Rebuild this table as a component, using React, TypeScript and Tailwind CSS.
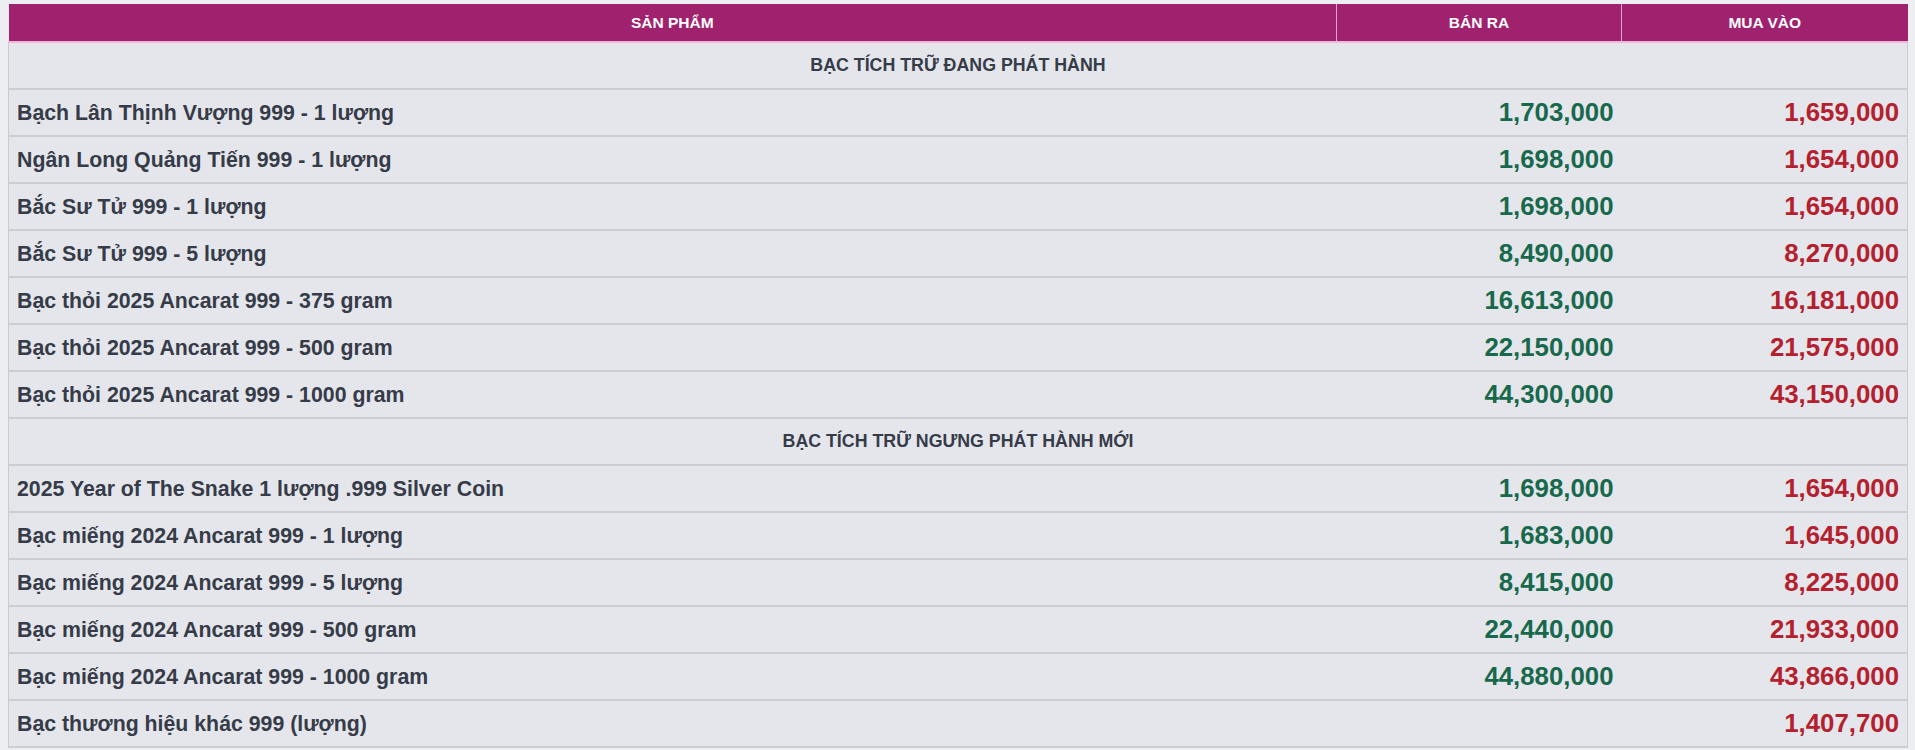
import React from "react";

type Row =
  | { type: "section"; title: string }
  | { type: "item"; name: string; sell: string; buy: string };

const rows: Row[] = [
  { type: "section", title: "BẠC TÍCH TRỮ ĐANG PHÁT HÀNH" },
  { type: "item", name: "Bạch Lân Thịnh Vượng 999 - 1 lượng", sell: "1,703,000", buy: "1,659,000" },
  { type: "item", name: "Ngân Long Quảng Tiến 999 - 1 lượng", sell: "1,698,000", buy: "1,654,000" },
  { type: "item", name: "Bắc Sư Tử 999 - 1 lượng", sell: "1,698,000", buy: "1,654,000" },
  { type: "item", name: "Bắc Sư Tử 999 - 5 lượng", sell: "8,490,000", buy: "8,270,000" },
  { type: "item", name: "Bạc thỏi 2025 Ancarat 999 - 375 gram", sell: "16,613,000", buy: "16,181,000" },
  { type: "item", name: "Bạc thỏi 2025 Ancarat 999 - 500 gram", sell: "22,150,000", buy: "21,575,000" },
  { type: "item", name: "Bạc thỏi 2025 Ancarat 999 - 1000 gram", sell: "44,300,000", buy: "43,150,000" },
  { type: "section", title: "BẠC TÍCH TRỮ NGƯNG PHÁT HÀNH MỚI" },
  { type: "item", name: "2025 Year of The Snake 1 lượng .999 Silver Coin", sell: "1,698,000", buy: "1,654,000" },
  { type: "item", name: "Bạc miếng 2024 Ancarat 999 - 1 lượng", sell: "1,683,000", buy: "1,645,000" },
  { type: "item", name: "Bạc miếng 2024 Ancarat 999 - 5 lượng", sell: "8,415,000", buy: "8,225,000" },
  { type: "item", name: "Bạc miếng 2024 Ancarat 999 - 500 gram", sell: "22,440,000", buy: "21,933,000" },
  { type: "item", name: "Bạc miếng 2024 Ancarat 999 - 1000 gram", sell: "44,880,000", buy: "43,866,000" },
  { type: "item", name: "Bạc thương hiệu khác 999 (lượng)", sell: "", buy: "1,407,700" },
];

export default function App() {
  return (
    <div
      className="min-h-[750px] w-full bg-[#eceef1] pt-[4px] pl-[8px] pr-[7px]"
      style={{ fontFamily: '"Liberation Sans", Arial, sans-serif' }}
    >
      <table className="w-full table-fixed border-collapse bg-[#e4e6eb]">
        <colgroup>
          <col />
          <col className="w-[285px]" />
          <col className="w-[286px]" />
        </colgroup>
        <thead>
          <tr className="h-[38px] bg-[#a0226f] text-[15.5px] font-bold uppercase text-white">
            <th className="border-b-2 border-r border-b-[#f2b8dc] border-r-[#e7a3cc] text-center align-middle font-bold">
              SẢN PHẨM
            </th>
            <th className="border-b-2 border-r border-b-[#f2b8dc] border-r-[#e7a3cc] text-center align-middle font-bold">
              BÁN RA
            </th>
            <th className="border-b-2 border-b-[#f2b8dc] text-center align-middle font-bold">
              MUA VÀO
            </th>
          </tr>
        </thead>
        <tbody>
          {rows.map((r, i) =>
            r.type === "section" ? (
              <tr key={i} className="h-[47px]">
                <td
                  colSpan={3}
                  className="border-x border-b-2 border-x-[#c9ccd2] border-b-[#cbced4] text-center align-middle text-[17.8px] font-bold text-[#363b48]"
                >
                  {r.title}
                </td>
              </tr>
            ) : (
              <tr key={i} className="h-[47px]">
                <td className="border-l border-b-2 border-l-[#c9ccd2] border-b-[#cbced4] pl-[8px] pt-[2px] align-middle text-[21.3px] font-bold text-[#363b48]">
                  {r.name}
                </td>
                <td className="border-b-2 border-b-[#cbced4] pr-[8px] text-right align-middle text-[25.8px] font-bold text-[#18694c]">
                  {r.sell}
                </td>
                <td className="border-r border-b-2 border-r-[#c9ccd2] border-b-[#cbced4] pr-[8px] text-right align-middle text-[25.8px] font-bold text-[#b4202e]">
                  {r.buy}
                </td>
              </tr>
            )
          )}
        </tbody>
      </table>
    </div>
  );
}
